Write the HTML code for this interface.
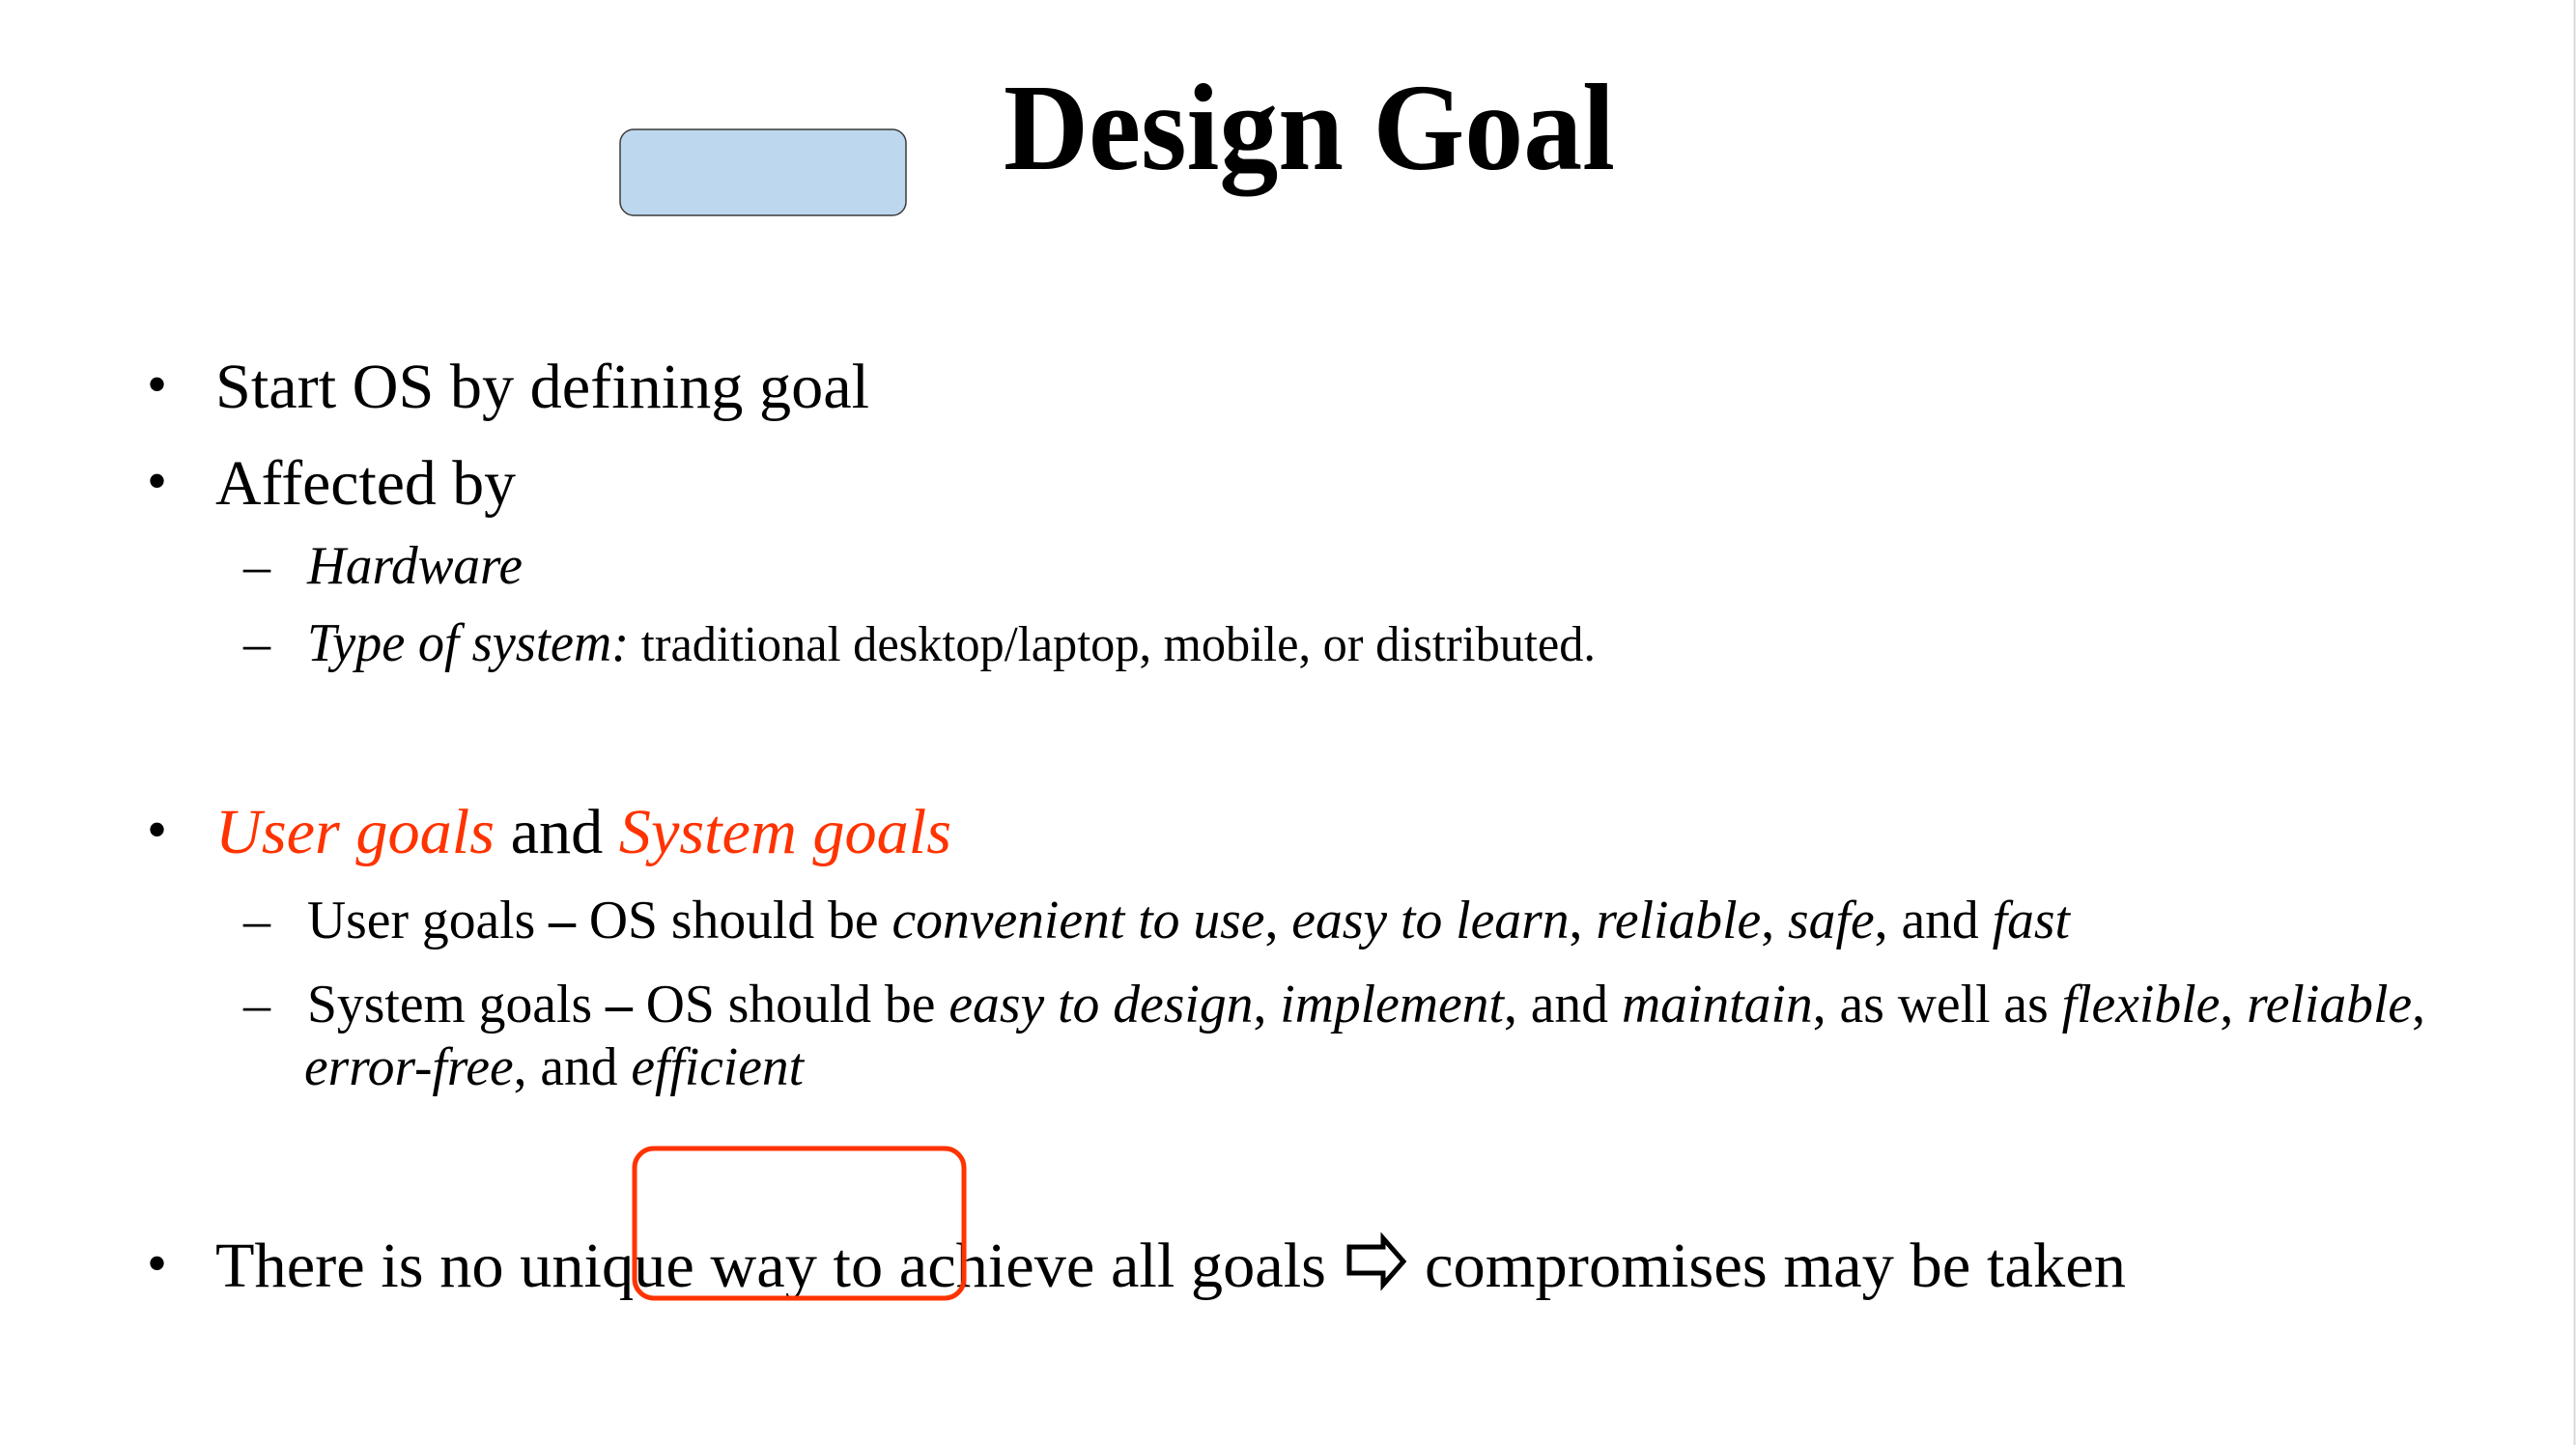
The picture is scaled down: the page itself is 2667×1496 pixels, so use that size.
<!DOCTYPE html>
<html><head><meta charset="utf-8"><style>
html,body{margin:0;padding:0;background:#fff;}
svg{display:block;}
</style></head><body>
<svg width="2667" height="1496" viewBox="0 0 2667 1496" xmlns="http://www.w3.org/2000/svg" font-family="'Liberation Serif', 'DejaVu Serif', serif">
<rect width="2667" height="1496" fill="#fff"/>
<line x1="2665.5" y1="0" x2="2665.5" y2="1496" stroke="#d8d8d8" stroke-width="2"/>
<rect x="642" y="134" width="296" height="89" rx="14" fill="#bdd7ee" stroke="#3a3a3a" stroke-width="1.5"/>
<text x="1039" y="175" font-size="128" font-weight="bold" textLength="633" lengthAdjust="spacingAndGlyphs">Design Goal</text>

<text x="152" y="418" font-size="60">•</text>
<text x="223" y="422" font-size="66" textLength="677" lengthAdjust="spacingAndGlyphs">Start OS by defining goal</text>
<text x="152" y="518" font-size="60">•</text>
<text x="223" y="522" font-size="66" textLength="311" lengthAdjust="spacingAndGlyphs">Affected by</text>

<text x="252" y="604" font-size="56">–</text>
<text x="318" y="604" font-size="56" font-style="italic" textLength="223" lengthAdjust="spacingAndGlyphs">Hardware</text>
<text x="252" y="684" font-size="56">–</text>
<text x="318" y="684" font-size="52" textLength="1334" lengthAdjust="spacingAndGlyphs"><tspan font-style="italic" font-size="56">Type of system:</tspan> traditional desktop/laptop, mobile, or distributed.</text>

<text x="152" y="879" font-size="60">•</text>
<text x="223" y="883" font-size="66" textLength="762" lengthAdjust="spacingAndGlyphs"><tspan fill="#ff3300" font-style="italic">User goals</tspan> and <tspan fill="#ff3300" font-style="italic">System goals</tspan></text>

<text x="252" y="971" font-size="56">–</text>
<text x="318" y="971" font-size="56" textLength="1825" lengthAdjust="spacingAndGlyphs">User goals <tspan font-weight="bold">–</tspan> OS should be <tspan font-style="italic">convenient to use</tspan>, <tspan font-style="italic">easy to learn</tspan>, <tspan font-style="italic">reliable</tspan>, <tspan font-style="italic">safe</tspan>, and <tspan font-style="italic">fast</tspan></text>
<text x="252" y="1058" font-size="56">–</text>
<text x="318" y="1058" font-size="56" textLength="2193" lengthAdjust="spacingAndGlyphs">System goals <tspan font-weight="bold">–</tspan> OS should be <tspan font-style="italic">easy to design</tspan>, <tspan font-style="italic">implement</tspan>, and <tspan font-style="italic">maintain</tspan>, as well as <tspan font-style="italic">flexible</tspan>, <tspan font-style="italic">reliable</tspan>,</text>
<text x="315" y="1123" font-size="56" textLength="517" lengthAdjust="spacingAndGlyphs"><tspan font-style="italic">error-free</tspan>, and <tspan font-style="italic">efficient</tspan></text>

<text x="152" y="1328" font-size="60">•</text>
<text x="223" y="1332" font-size="66" textLength="1150" lengthAdjust="spacingAndGlyphs">There is no unique way to achieve all goals</text>
<path d="M1397 1291 H1432 V1282 L1453 1306 L1432 1330 V1318 H1397 Z" fill="none" stroke="#000" stroke-width="5" stroke-linejoin="miter"/>
<text x="1475" y="1332" font-size="66" textLength="726" lengthAdjust="spacingAndGlyphs">compromises may be taken</text>

<rect x="657" y="1189" width="341" height="155" rx="20" fill="none" stroke="#ff3300" stroke-width="5"/>
</svg>
</body></html>
